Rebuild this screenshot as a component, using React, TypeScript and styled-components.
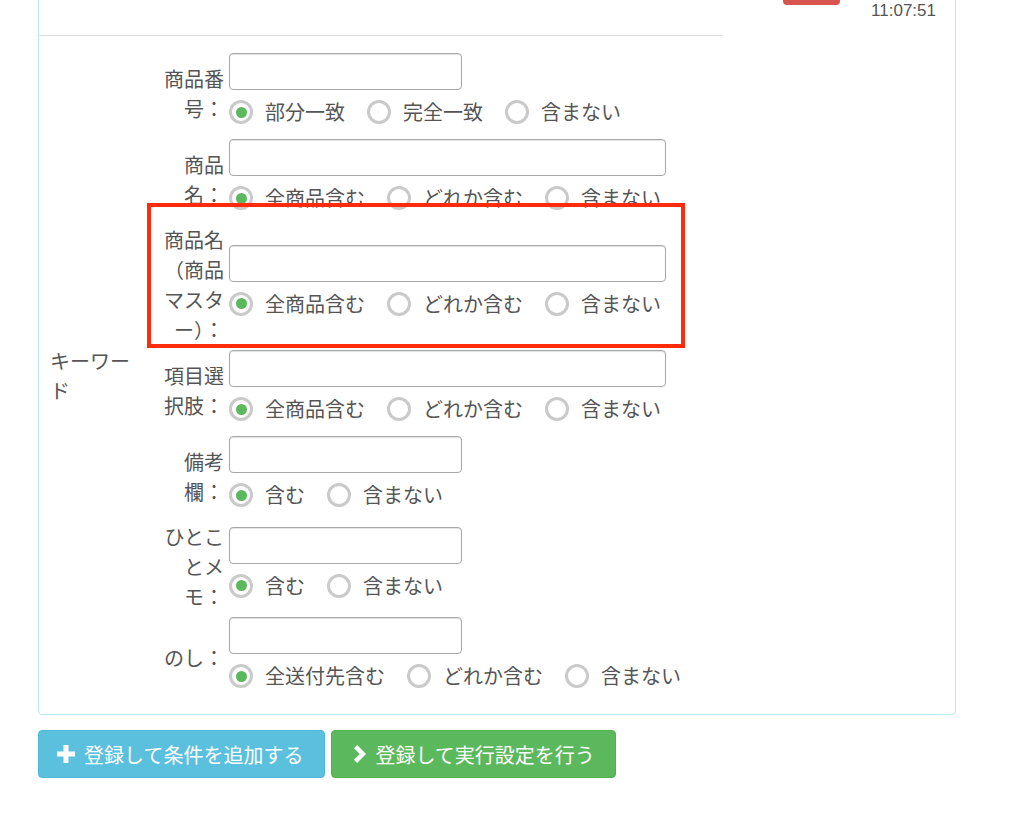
import React from "react";
import styled, { createGlobalStyle } from "styled-components";

const GlobalStyle = createGlobalStyle`
  html, body {
    margin: 0;
    padding: 0;
    background: #fff;
  }
  body {
    font-family: "Noto Sans CJK JP", "Noto Sans", sans-serif;
    color: #555;
    overflow: hidden;
  }
`;

type Option = { label: string; checked?: boolean };

type Field = {
  label: string;
  inputWidth: number;
  options: Option[];
  highlight?: boolean;
};

const fields: Field[] = [
  {
    label: "商品番号：",
    inputWidth: 233,
    options: [{ label: "部分一致", checked: true }, { label: "完全一致" }, { label: "含まない" }],
  },
  {
    label: "商品名：",
    inputWidth: 437,
    options: [{ label: "全商品含む", checked: true }, { label: "どれか含む" }, { label: "含まない" }],
  },
  {
    label: "商品名（商品マスター）：",
    inputWidth: 437,
    highlight: true,
    options: [{ label: "全商品含む", checked: true }, { label: "どれか含む" }, { label: "含まない" }],
  },
  {
    label: "項目選択肢：",
    inputWidth: 437,
    options: [{ label: "全商品含む", checked: true }, { label: "どれか含む" }, { label: "含まない" }],
  },
  {
    label: "備考欄：",
    inputWidth: 233,
    options: [{ label: "含む", checked: true }, { label: "含まない" }],
  },
  {
    label: "ひとことメモ：",
    inputWidth: 233,
    options: [{ label: "含む", checked: true }, { label: "含まない" }],
  },
  {
    label: "のし：",
    inputWidth: 233,
    options: [{ label: "全送付先含む", checked: true }, { label: "どれか含む" }, { label: "含まない" }],
  },
];

const Page = styled.div`
  margin-top: -60px;
  padding-left: 38px;
`;

const Panel = styled.section`
  box-sizing: border-box;
  width: 918px;
  border: 1px solid #bce8f1;
  border-radius: 4px;
  display: grid;
  grid-template-columns: 684px 1fr;
`;

const MainCol = styled.div`
  min-width: 0;
`;

const TitleBar = styled.div`
  height: 95px;
  box-sizing: border-box;
  border-bottom: 1px solid #ddd;
`;

const SideCol = styled.div`
  display: flex;
  flex-direction: column;
  align-items: flex-end;
  padding: 40px 19px 0 0;
`;

const Badge = styled.span`
  display: block;
  width: 57px;
  height: 24px;
  margin-right: 96px;
  border-radius: 4px;
  background: #d9534f;
`;

const Time = styled.div`
  margin-top: -5px;
  font-family: "Liberation Sans", Arial, sans-serif;
  font-size: 17px;
  line-height: 22px;
  color: #555;
`;

const KeywordGroup = styled.div`
  display: flex;
  align-items: center;
  padding: 17px 0 16px 11px;
`;

const GroupLabel = styled.div`
  width: 90px;
  flex-shrink: 0;
  font-size: 20px;
  line-height: 30px;
`;

const Rows = styled.div`
  display: flex;
  flex-direction: column;
  gap: 5px;
`;

const Row = styled.div<{ $highlight?: boolean }>`
  position: relative;
  display: flex;
  align-items: center;

  ${(p) =>
    p.$highlight &&
    `
    &::after {
      content: "";
      position: absolute;
      left: 7px;
      top: -22px;
      width: 538px;
      height: 145px;
      box-sizing: border-box;
      border: 4px solid #ff2b0a;
      pointer-events: none;
    }
  `}
`;

const RowLabel = styled.label`
  box-sizing: border-box;
  width: 84px;
  flex-shrink: 0;
  padding-left: 18px;
  margin-right: 5px;
  text-align: right;
  font-size: 20px;
  line-height: 30px;
`;

const Control = styled.div`
  display: flex;
  flex-direction: column;
`;

const TextInput = styled.input<{ $w: number }>`
  box-sizing: border-box;
  width: ${(p) => p.$w}px;
  height: 37px;
  margin: 0;
  border: 1px solid #a8a8a8;
  border-radius: 4px;
  box-shadow: inset 0 1px 1px rgba(0, 0, 0, 0.12);
  background: #fff;
  outline: none;
`;

const RadioRow = styled.div`
  display: flex;
  padding: 7px 0;
  white-space: nowrap;
  font-size: 20px;
  line-height: 30px;
`;

const RadioItem = styled.span`
  display: flex;
  align-items: center;
  margin-right: 22px;
`;

const RadioMark = styled.span<{ $checked?: boolean }>`
  box-sizing: border-box;
  width: 24px;
  height: 24px;
  border: 3px solid #cacaca;
  border-radius: 50%;
  background: #fff;
  display: flex;
  align-items: center;
  justify-content: center;

  &::before {
    content: "";
    width: 11px;
    height: 11px;
    border-radius: 50%;
    background: ${(p) => (p.$checked ? "#5cb85c" : "transparent")};
  }
`;

const RadioText = styled.span`
  margin-left: 12px;
`;

const ButtonBar = styled.div`
  display: flex;
  gap: 6px;
  margin-top: 15px;
`;

const ActionButton = styled.button<{ $tone: "info" | "success" }>`
  display: flex;
  align-items: center;
  gap: 9px;
  height: 48px;
  padding: 0 ${(p) => (p.$tone === "info" ? 21 : 20)}px 0
    ${(p) => (p.$tone === "info" ? 18 : 22)}px;
  border: 1px solid ${(p) => (p.$tone === "info" ? "#4fb9d9" : "#52b152")};
  border-radius: 4px;
  background: ${(p) => (p.$tone === "info" ? "#5bc0de" : "#5cb85c")};
  color: #fff;
  font-family: "Noto Sans CJK JP", "Noto Sans", sans-serif;
  font-size: 20px;
  cursor: pointer;

  svg {
    flex-shrink: 0;
    fill: #fff;
  }
`;

const PlusIcon = () => (
  <svg width="18" height="18" viewBox="0 0 18 18">
    <path d="M6.5 0h5v6.5H18v5h-6.5V18h-5v-6.5H0v-5h6.5z" />
  </svg>
);

const ChevronIcon = () => (
  <svg width="12" height="18" viewBox="0 0 12 18">
    <path d="M0 3.2L3.2 0 12 9l-8.8 9L0 14.8 5.7 9z" />
  </svg>
);

export default function App() {
  return (
    <>
      <GlobalStyle />
      <Page>
        <Panel>
          <MainCol>
            <TitleBar />
            <KeywordGroup>
              <GroupLabel>キーワード</GroupLabel>
              <Rows>
                {fields.map((f, i) => (
                  <Row key={i} $highlight={f.highlight}>
                    <RowLabel>{f.label}</RowLabel>
                    <Control>
                      <TextInput type="text" $w={f.inputWidth} />
                      <RadioRow>
                        {f.options.map((o) => (
                          <RadioItem key={o.label}>
                            <RadioMark $checked={o.checked} />
                            <RadioText>{o.label}</RadioText>
                          </RadioItem>
                        ))}
                      </RadioRow>
                    </Control>
                  </Row>
                ))}
              </Rows>
            </KeywordGroup>
          </MainCol>
          <SideCol>
            <Badge />
            <Time>11:07:51</Time>
          </SideCol>
        </Panel>
        <ButtonBar>
          <ActionButton $tone="info">
            <PlusIcon />
            登録して条件を追加する
          </ActionButton>
          <ActionButton $tone="success">
            <ChevronIcon />
            登録して実行設定を行う
          </ActionButton>
        </ButtonBar>
      </Page>
    </>
  );
}
